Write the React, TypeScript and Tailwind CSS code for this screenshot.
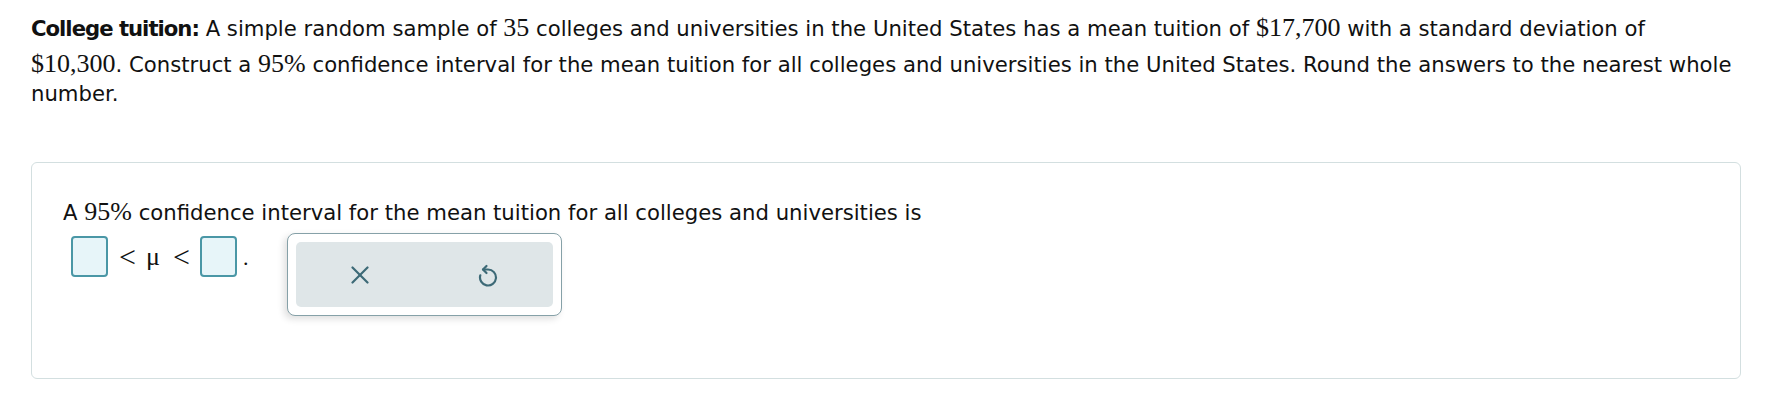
import React from "react";

const sans = "font-['DejaVu_Sans','Verdana',sans-serif]";
const serif = "font-['Liberation_Serif','Times_New_Roman',serif]";

function M({ children }: { children: React.ReactNode }) {
  // inline math, like MathJax: larger serif, a bit taller above the baseline
  return (
    <span className={`${serif} inline-block pt-[6px] text-[26px] leading-[29px]`}>{children}</span>
  );
}

function AnswerBox() {
  return <span className="block h-[41px] w-[37px] rounded-[4px] border-2 border-[#4a97a6] bg-[#e7f5f9]" />;
}

function ClearIcon() {
  return (
    <svg width="18" height="18" viewBox="0 0 18 18" fill="none" stroke="currentColor" strokeWidth="2.2" strokeLinecap="round">
      <path d="M1.5 1.5 16.5 16.5" />
      <path d="M16.5 1.5 1.5 16.5" />
    </svg>
  );
}

function UndoIcon() {
  return (
    <svg width="20" height="24" viewBox="0 0 20 24" fill="none" stroke="currentColor" strokeWidth="2.2" strokeLinecap="round" strokeLinejoin="round">
      <path d="M8.5 3 5 6.5 8.5 10" />
      <path d="M5 6.5H10A8 8 0 1 1 2.3 12.3" />
    </svg>
  );
}

export default function App() {
  return (
    <div className={`${sans} min-h-[420px] bg-white pl-[31px] pr-[27px] text-[21.2px] leading-[29px] text-[#111]`}>
      <p className="pt-[7px]">
        <b className="tracking-[-1px]">College tuition:</b> A simple random sample of <M>35</M> colleges and
        universities in the United States has a mean tuition of <M>$17,700</M> with a standard deviation of
        <br />
        <span className="whitespace-nowrap">
          <M>$10,300</M>.
        </span>{" "}
        Construct a <M>95%</M> confidence interval for the mean tuition for all colleges and universities in the United
        States. Round the answers to the nearest whole number.
      </p>

      <div className="mt-[54px] rounded-[6px] border border-[#d3dfe0] px-[31px] pb-[62px] pt-[28px]">
        <p>
          A <M>95%</M> confidence interval for the mean tuition for all colleges and universities is
        </p>

        <div className="mt-[6px] flex items-start">
          <div className={`${serif} ml-[8px] mt-[3px] flex h-[41px] items-center leading-none`}>
            <AnswerBox />
            <span className="ml-[11px] w-[17px] text-center text-[30px]">&lt;</span>
            <span className="ml-[10px] w-[14px] text-center text-[26px]">μ</span>
            <span className="ml-[13px] w-[17px] text-center text-[30px]">&lt;</span>
            <span className="ml-[10px]">
              <AnswerBox />
            </span>
            <span className="ml-[6px] self-end pb-[8px] text-[22px]">.</span>
          </div>

          <div className="ml-[38px] w-[275px] rounded-[8px] border border-[#86a1a8] bg-white p-[8px] shadow-[-3px_3px_7px_rgba(0,0,0,0.13)]">
            <div className="flex h-[65px] rounded-[5px] bg-[#dfe6e8] text-[#3d6a77]">
              <button type="button" className="flex flex-1 items-center justify-center">
                <ClearIcon />
              </button>
              <button type="button" className="flex flex-1 items-center justify-center">
                <UndoIcon />
              </button>
            </div>
          </div>
        </div>
      </div>
    </div>
  );
}
